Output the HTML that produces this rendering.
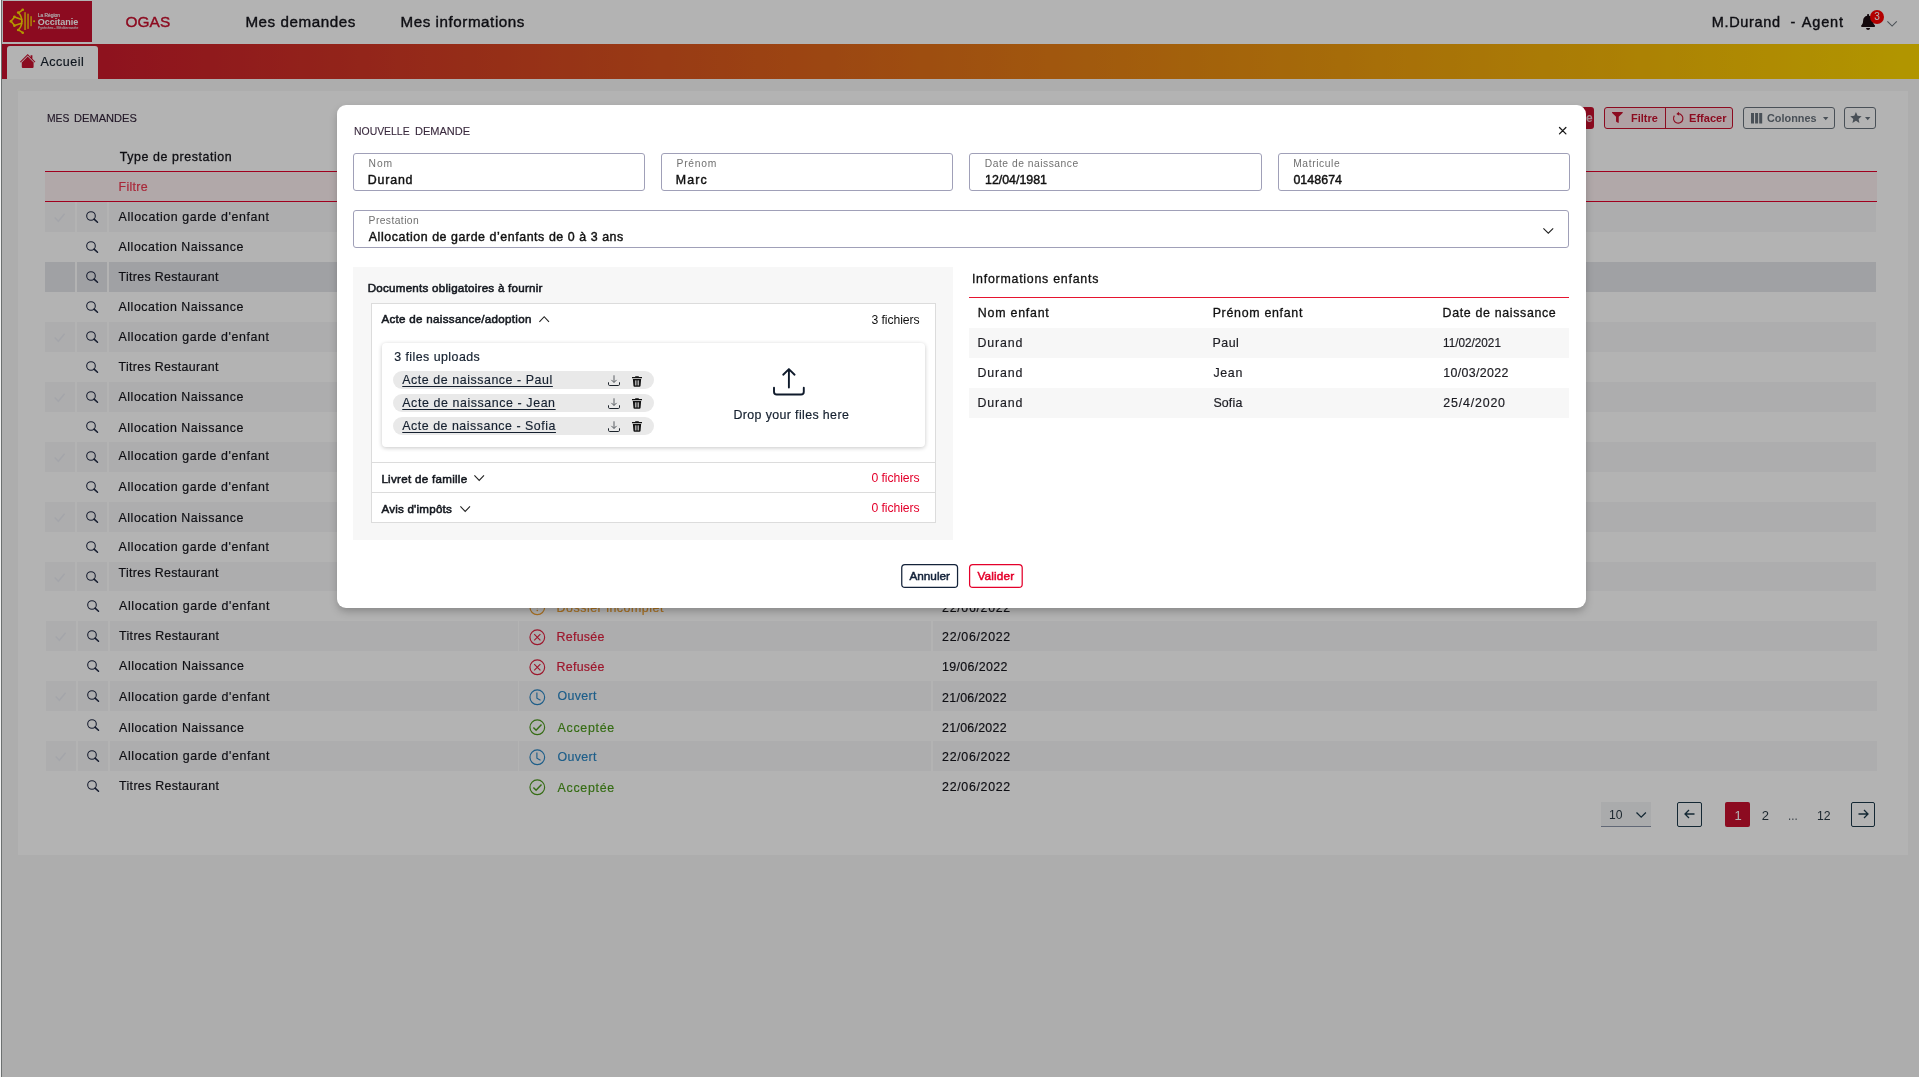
<!DOCTYPE html>
<html lang="fr"><head><meta charset="utf-8"><title>OGAS - Nouvelle demande</title>
<style>
html,body{margin:0;padding:0;}
body{width:1919px;height:1077px;overflow:hidden;position:relative;background:#f7f7f7;font-family:"Liberation Sans",sans-serif;}
body div,body span.t,body svg{position:absolute;box-sizing:border-box;}
.t{white-space:pre;line-height:1;font-family:"Liberation Sans",sans-serif;}
svg{overflow:visible;}
.L{left:0;top:0;width:1919px;height:1077px;will-change:transform;}
</style></head><body>
<div class="L"><!-- bg -->
<div style="left:0.00px;top:0.00px;width:1919.00px;height:44.00px;background:#fff;"></div>
<div style="left:3.00px;top:1.20px;width:89.00px;height:40.80px;background:#c8102e;"></div>
<svg style="left:0;top:0;width:100px;height:44px" viewBox="0 0 100 44">
<g fill="none" stroke="#ffd900" stroke-width="1.6" stroke-linecap="round" stroke-linejoin="round">
<path d="M21.9 21.3 C21.9 18 20.6 15 18.5 12.8 L22.7 9.9"/>
<path d="M21.9 21.3 C21.9 24.600 20.600 27.600 18.500 29.800 L22.700 32.700"/>
<path d="M21.6 19.4 L14.6 17 L11 21.3 L14.6 25.6 L21.6 23.200"/>
</g>
<g fill="#ffd900">
<circle cx="22.7" cy="9.8" r="1.3"/><circle cx="18.2" cy="12.6" r="1.3"/><circle cx="14.4" cy="16.8" r="1.3"/>
<circle cx="10.9" cy="21.3" r="1.35"/>
<circle cx="14.4" cy="25.800" r="1.3"/><circle cx="18.2" cy="30" r="1.3"/><circle cx="22.7" cy="32.800" r="1.3"/>
<circle cx="34.1" cy="21.3" r="1.05"/>
</g>
<g fill="#f0a010">
<rect x="24.1" y="12.2" width="1.9" height="17.8"/>
<rect x="27.1" y="13.7" width="1.9" height="15.2"/>
<rect x="30.2" y="16.2" width="1.8" height="10"/>
</g>
<g fill="#f4e9ec" font-family="Liberation Sans, sans-serif">
<text x="37.8" y="16.9" font-size="4.6" textLength="22.2" lengthAdjust="spacingAndGlyphs" stroke="#f4e9ec" stroke-width="0.18">La Région</text>
<text x="37.7" y="24.6" font-size="8.7" font-weight="700" textLength="40.6" lengthAdjust="spacingAndGlyphs" fill="#fff">Occitanie</text>
<text x="37.8" y="28.5" font-size="3.2" stroke="#e6c8ce" stroke-width="0.1" textLength="40.4" lengthAdjust="spacingAndGlyphs" fill="#e6c8ce">Pyrénées - Méditerranée</text>
</g>
</svg>
<span class="t" style="left:125.40px;top:14.00px;font-size:15.4px;color:#c8102e;-webkit-text-stroke:0.4px #c8102e;letter-spacing:0.131px;">OGAS</span>
<span class="t" style="left:245.40px;top:14.00px;font-size:15.2px;color:#15151c;-webkit-text-stroke:0.4px #15151c;letter-spacing:0.560px;">Mes demandes</span>
<span class="t" style="left:400.50px;top:14.00px;font-size:15.2px;color:#15151c;-webkit-text-stroke:0.4px #15151c;letter-spacing:0.551px;">Mes informations</span>
<span class="t" style="left:1711.80px;top:15.00px;font-size:14.5px;color:#15151c;-webkit-text-stroke:0.4px #15151c;letter-spacing:0.657px;">M.Durand</span>
<span class="t" style="left:1790.40px;top:15.00px;font-size:14.5px;color:#15151c;-webkit-text-stroke:0.4px #15151c;">-</span>
<span class="t" style="left:1801.80px;top:15.00px;font-size:14.5px;color:#15151c;-webkit-text-stroke:0.4px #15151c;letter-spacing:0.834px;">Agent</span>
<svg style="left:1860.6px;top:14.2px;width:14.2px;height:15.9px" viewBox="0 0 448 512"><path fill="#1a0a10" d="M224 512c35.3 0 63.9-28.6 63.9-64H160.1c0 35.400 28.600 64 63.900 64zm215.400-149.700c-19.300-20.800-55.500-52-55.500-154.300 0-77.700-54.500-139.900-127.900-155.200V32c0-17.700-14.300-32-32-32s-32 14.300-32 32v20.800C118.600 68.100 64.100 130.300 64.100 208c0 102.300-36.200 133.500-55.500 154.300-6 6.400-8.700 14.200-8.600 21.700.100 16.400 13 32 32.100 32h383.800c19.100 0 32-15.600 32.100-32 .100-7.500-2.600-15.300-8.600-21.700z"/></svg>
<div style="left:1869.80px;top:9.90px;width:14.20px;height:14.20px;background:#ff0000;border-radius:50%;"></div>
<span class="t" style="left:1874.20px;top:12.00px;font-size:10px;color:#fff;">3</span>
<svg style="left:1886.8px;top:20.5px;width:10.2px;height:5.8px" viewBox="0 0 10.2 5.8"><path d="M0.4 0.4 L5.1 5.1 L9.8 0.4" fill="none" stroke="#6c757d" stroke-width="1.1"/></svg>
<div style="left:0.00px;top:44.00px;width:1919.00px;height:35.00px;background:linear-gradient(90deg,#c8102e 0%,#fdd600 100%);"></div>
<div style="left:7.00px;top:46.00px;width:91.00px;height:33.00px;background:#fff;border-radius:3px 3px 0 0;"></div>
<svg style="left:19.8px;top:53.8px;width:15.4px;height:14px" viewBox="0 0 15.4 14"><path fill="#c8102e" d="M7.7 0 L10.6 2.9 V1.2 H12.4 V4.7 L15.4 7.7 L14.7 8.4 L7.7 1.5 L0.7 8.4 L0 7.7 Z"/><path fill="#c8102e" d="M7.7 2.6 L13.6 8.4 V13 Q13.6 14 12.6 14 H2.8 Q1.8 14 1.8 13 V8.4 Z"/></svg>
<span class="t" style="left:40.40px;top:56.00px;font-size:12.5px;color:#16202c;-webkit-text-stroke:0.2px #16202c;letter-spacing:0.514px;">Accueil</span>
<div style="left:18.00px;top:91.00px;width:1889.90px;height:764.00px;background:#fff;"></div>
<span class="t" style="left:46.67px;top:113.00px;font-size:11.8px;color:#33243a;-webkit-text-stroke:0.15px #33243a;transform:scaleX(0.8744);transform-origin:0 0;">MES</span>
<span class="t" style="left:73.87px;top:113.00px;font-size:11.8px;color:#33243a;-webkit-text-stroke:0.15px #33243a;transform:scaleX(0.9398);transform-origin:0 0;">DEMANDES</span>
<div style="left:1540.00px;top:107.20px;width:54.00px;height:21.80px;background:#c8102e;border-radius:3px;"></div>
<span class="t" style="left:1586.00px;top:112.00px;font-size:12px;color:#f3ccd4;font-weight:700;">e</span>
<div style="left:1604.20px;top:107.20px;width:128.80px;height:21.80px;background:#fbe6ea;border:1px solid #c8102e;border-radius:3px;"></div>
<div style="left:1665.00px;top:107.20px;width:1.00px;height:21.80px;background:#c8102e;"></div>
<svg style="left:1612.1px;top:112px;width:10.8px;height:11px" viewBox="0 0 512 512"><path fill="#c8102e" d="M487.976 0H24.028C2.710 0-8.047 25.866 7.058 40.971L192 225.941V432c0 7.831 3.821 15.170 10.237 19.662l80 55.980C298.020 518.690 320 507.493 320 487.980V225.941l184.947-184.970C520.021 25.896 509.338 0 487.976 0z"/></svg>
<span class="t" style="left:1630.60px;top:113.00px;font-size:11.8px;color:#c8102e;font-weight:700;transform:scaleX(0.9289);transform-origin:0 0;">Filtre</span>
<svg style="left:1672.3px;top:111.2px;width:12px;height:13px" viewBox="0 0 12 13"><path d="M2.400 4.600 A4.700 4.700 0 1 0 6 2.700" fill="none" stroke="#c8102e" stroke-width="1.15"/><path d="M6.900 0.700 L4.300 2.900 L7.300 4.700 Z" fill="#c8102e"/></svg>
<span class="t" style="left:1688.80px;top:113.00px;font-size:11.8px;color:#c8102e;font-weight:700;transform:scaleX(0.9379);transform-origin:0 0;">Effacer</span>
<div style="left:1743.20px;top:107.20px;width:91.80px;height:21.80px;border:1px solid #68727c;border-radius:3px;"></div>
<svg style="left:1750.8px;top:113.3px;width:11.2px;height:10.5px" viewBox="0 0 11.2 10.5"><rect x="0" y="0" width="3" height="10.500" fill="#68727c"/><rect x="4.100" y="0" width="3" height="10.500" fill="#68727c"/><rect x="8.200" y="0" width="3" height="10.500" fill="#68727c"/></svg>
<span class="t" style="left:1767.30px;top:113.00px;font-size:11.8px;color:#68727c;font-weight:700;transform:scaleX(0.9210);transform-origin:0 0;">Colonnes</span>
<svg style="left:1823.3px;top:116.6px;width:5.4px;height:3.2px" viewBox="0 0 5.4 3.2"><path d="M0 0 H5.4 L2.7 3.2 Z" fill="#68727c"/></svg>
<div style="left:1844.00px;top:107.20px;width:31.80px;height:21.80px;border:1px solid #68727c;border-radius:3px;"></div>
<svg style="left:1849.8px;top:112px;width:11.9px;height:11.4px" viewBox="0 0 24 23"><path fill="#68727c" d="M12 0 L15.3 7.6 L23.5 8.4 L17.3 13.9 L19.100 22 L12 17.8 L4.900 22 L6.700 13.900 L0.500 8.400 L8.700 7.600 Z"/></svg>
<svg style="left:1865.4px;top:116.6px;width:5.4px;height:3.2px" viewBox="0 0 5.4 3.2"><path d="M0 0 H5.4 L2.7 3.2 Z" fill="#68727c"/></svg>
<span class="t" style="left:119.85px;top:151.00px;font-size:12.4px;color:#15151c;-webkit-text-stroke:0.3px #15151c;letter-spacing:0.585px;">Type de prestation</span>
<div style="left:45.00px;top:171.20px;width:1832.00px;height:30.60px;background:#fdeff1;border-top:1.2px solid #e4002b;border-bottom:1.2px solid #e4002b;"></div>
<span class="t" style="left:118.50px;top:181.00px;font-size:12.4px;color:#f03a52;-webkit-text-stroke:0.2px #f03a52;letter-spacing:0.331px;">Filtre</span>
<div style="left:45.00px;top:202.10px;width:30.00px;height:29.90px;background:#f7f7f8;"></div>
<div style="left:77.00px;top:202.10px;width:30.00px;height:29.90px;background:#f7f7f8;"></div>
<div style="left:109.00px;top:202.10px;width:408.00px;height:29.90px;background:#f7f7f8;"></div>
<div style="left:518.00px;top:202.10px;width:412.00px;height:29.90px;background:#f7f7f8;"></div>
<div style="left:932.00px;top:202.10px;width:944.00px;height:29.90px;background:#f7f7f8;"></div>
<svg style="left:54.00px;top:212.70px;width:11.2px;height:9.2px" viewBox="0 0 11.2 9.2"><path d="M0.7 4.600 L4.400 8.300 L10.600 0.800" fill="none" stroke="#eaecf3" stroke-width="1.5"/></svg>
<svg style="left:85.80px;top:211.10px;width:12.6px;height:12px" viewBox="0 0 12.6 12"><circle cx="5" cy="5" r="4.3" fill="none" stroke="#1c2540" stroke-width="1.05"/><path d="M8.1 8.1 L11.500 11.300" stroke="#1c2540" stroke-width="1.5" stroke-linecap="round"/></svg>
<span class="t" style="left:118.59px;top:211.00px;font-size:12.4px;color:#15151c;-webkit-text-stroke:0.18px #15151c;letter-spacing:0.594px;">Allocation garde d'enfant</span>
<svg style="left:85.80px;top:241.10px;width:12.6px;height:12px" viewBox="0 0 12.6 12"><circle cx="5" cy="5" r="4.3" fill="none" stroke="#1c2540" stroke-width="1.05"/><path d="M8.1 8.1 L11.500 11.300" stroke="#1c2540" stroke-width="1.5" stroke-linecap="round"/></svg>
<span class="t" style="left:118.59px;top:241.00px;font-size:12.4px;color:#15151c;-webkit-text-stroke:0.18px #15151c;letter-spacing:0.510px;">Allocation Naissance</span>
<div style="left:45.00px;top:262.10px;width:30.00px;height:29.90px;background:#e4e5ea;"></div>
<div style="left:77.00px;top:262.10px;width:30.00px;height:29.90px;background:#e4e5ea;"></div>
<div style="left:109.00px;top:262.10px;width:408.00px;height:29.90px;background:#e4e5ea;"></div>
<div style="left:518.00px;top:262.10px;width:412.00px;height:29.90px;background:#e4e5ea;"></div>
<div style="left:932.00px;top:262.10px;width:944.00px;height:29.90px;background:#e4e5ea;"></div>
<svg style="left:85.80px;top:271.10px;width:12.6px;height:12px" viewBox="0 0 12.6 12"><circle cx="5" cy="5" r="4.3" fill="none" stroke="#1c2540" stroke-width="1.05"/><path d="M8.1 8.1 L11.500 11.300" stroke="#1c2540" stroke-width="1.5" stroke-linecap="round"/></svg>
<span class="t" style="left:118.59px;top:271.00px;font-size:12.4px;color:#15151c;-webkit-text-stroke:0.18px #15151c;letter-spacing:0.325px;">Titres Restaurant</span>
<svg style="left:85.80px;top:301.10px;width:12.6px;height:12px" viewBox="0 0 12.6 12"><circle cx="5" cy="5" r="4.3" fill="none" stroke="#1c2540" stroke-width="1.05"/><path d="M8.1 8.1 L11.500 11.300" stroke="#1c2540" stroke-width="1.5" stroke-linecap="round"/></svg>
<span class="t" style="left:118.59px;top:301.00px;font-size:12.4px;color:#15151c;-webkit-text-stroke:0.18px #15151c;letter-spacing:0.510px;">Allocation Naissance</span>
<div style="left:45.00px;top:322.10px;width:30.00px;height:29.90px;background:#f7f7f8;"></div>
<div style="left:77.00px;top:322.10px;width:30.00px;height:29.90px;background:#f7f7f8;"></div>
<div style="left:109.00px;top:322.10px;width:408.00px;height:29.90px;background:#f7f7f8;"></div>
<div style="left:518.00px;top:322.10px;width:412.00px;height:29.90px;background:#f7f7f8;"></div>
<div style="left:932.00px;top:322.10px;width:944.00px;height:29.90px;background:#f7f7f8;"></div>
<svg style="left:54.00px;top:332.70px;width:11.2px;height:9.2px" viewBox="0 0 11.2 9.2"><path d="M0.7 4.600 L4.400 8.300 L10.600 0.800" fill="none" stroke="#eaecf3" stroke-width="1.5"/></svg>
<svg style="left:85.80px;top:331.10px;width:12.6px;height:12px" viewBox="0 0 12.6 12"><circle cx="5" cy="5" r="4.3" fill="none" stroke="#1c2540" stroke-width="1.05"/><path d="M8.1 8.1 L11.500 11.300" stroke="#1c2540" stroke-width="1.5" stroke-linecap="round"/></svg>
<span class="t" style="left:118.59px;top:331.00px;font-size:12.4px;color:#15151c;-webkit-text-stroke:0.18px #15151c;letter-spacing:0.594px;">Allocation garde d'enfant</span>
<svg style="left:85.80px;top:361.10px;width:12.6px;height:12px" viewBox="0 0 12.6 12"><circle cx="5" cy="5" r="4.3" fill="none" stroke="#1c2540" stroke-width="1.05"/><path d="M8.1 8.1 L11.500 11.300" stroke="#1c2540" stroke-width="1.5" stroke-linecap="round"/></svg>
<span class="t" style="left:118.59px;top:361.00px;font-size:12.4px;color:#15151c;-webkit-text-stroke:0.18px #15151c;letter-spacing:0.325px;">Titres Restaurant</span>
<div style="left:45.00px;top:382.10px;width:30.00px;height:29.90px;background:#f7f7f8;"></div>
<div style="left:77.00px;top:382.10px;width:30.00px;height:29.90px;background:#f7f7f8;"></div>
<div style="left:109.00px;top:382.10px;width:408.00px;height:29.90px;background:#f7f7f8;"></div>
<div style="left:518.00px;top:382.10px;width:412.00px;height:29.90px;background:#f7f7f8;"></div>
<div style="left:932.00px;top:382.10px;width:944.00px;height:29.90px;background:#f7f7f8;"></div>
<svg style="left:54.00px;top:392.70px;width:11.2px;height:9.2px" viewBox="0 0 11.2 9.2"><path d="M0.7 4.600 L4.400 8.300 L10.600 0.800" fill="none" stroke="#eaecf3" stroke-width="1.5"/></svg>
<svg style="left:85.80px;top:391.10px;width:12.6px;height:12px" viewBox="0 0 12.6 12"><circle cx="5" cy="5" r="4.3" fill="none" stroke="#1c2540" stroke-width="1.05"/><path d="M8.1 8.1 L11.500 11.300" stroke="#1c2540" stroke-width="1.5" stroke-linecap="round"/></svg>
<span class="t" style="left:118.59px;top:391.00px;font-size:12.4px;color:#15151c;-webkit-text-stroke:0.18px #15151c;letter-spacing:0.510px;">Allocation Naissance</span>
<svg style="left:85.80px;top:421.10px;width:12.6px;height:12px" viewBox="0 0 12.6 12"><circle cx="5" cy="5" r="4.3" fill="none" stroke="#1c2540" stroke-width="1.05"/><path d="M8.1 8.1 L11.500 11.300" stroke="#1c2540" stroke-width="1.5" stroke-linecap="round"/></svg>
<span class="t" style="left:118.59px;top:422.00px;font-size:12.4px;color:#15151c;-webkit-text-stroke:0.18px #15151c;letter-spacing:0.510px;">Allocation Naissance</span>
<div style="left:45.00px;top:442.10px;width:30.00px;height:29.90px;background:#f7f7f8;"></div>
<div style="left:77.00px;top:442.10px;width:30.00px;height:29.90px;background:#f7f7f8;"></div>
<div style="left:109.00px;top:442.10px;width:408.00px;height:29.90px;background:#f7f7f8;"></div>
<div style="left:518.00px;top:442.10px;width:412.00px;height:29.90px;background:#f7f7f8;"></div>
<div style="left:932.00px;top:442.10px;width:944.00px;height:29.90px;background:#f7f7f8;"></div>
<svg style="left:54.00px;top:452.70px;width:11.2px;height:9.2px" viewBox="0 0 11.2 9.2"><path d="M0.7 4.600 L4.400 8.300 L10.600 0.800" fill="none" stroke="#eaecf3" stroke-width="1.5"/></svg>
<svg style="left:85.80px;top:451.10px;width:12.6px;height:12px" viewBox="0 0 12.6 12"><circle cx="5" cy="5" r="4.3" fill="none" stroke="#1c2540" stroke-width="1.05"/><path d="M8.1 8.1 L11.500 11.300" stroke="#1c2540" stroke-width="1.5" stroke-linecap="round"/></svg>
<span class="t" style="left:118.59px;top:450.00px;font-size:12.4px;color:#15151c;-webkit-text-stroke:0.18px #15151c;letter-spacing:0.594px;">Allocation garde d'enfant</span>
<svg style="left:85.80px;top:481.10px;width:12.6px;height:12px" viewBox="0 0 12.6 12"><circle cx="5" cy="5" r="4.3" fill="none" stroke="#1c2540" stroke-width="1.05"/><path d="M8.1 8.1 L11.500 11.300" stroke="#1c2540" stroke-width="1.5" stroke-linecap="round"/></svg>
<span class="t" style="left:118.59px;top:481.00px;font-size:12.4px;color:#15151c;-webkit-text-stroke:0.18px #15151c;letter-spacing:0.594px;">Allocation garde d'enfant</span>
<div style="left:45.00px;top:502.10px;width:30.00px;height:29.90px;background:#f7f7f8;"></div>
<div style="left:77.00px;top:502.10px;width:30.00px;height:29.90px;background:#f7f7f8;"></div>
<div style="left:109.00px;top:502.10px;width:408.00px;height:29.90px;background:#f7f7f8;"></div>
<div style="left:518.00px;top:502.10px;width:412.00px;height:29.90px;background:#f7f7f8;"></div>
<div style="left:932.00px;top:502.10px;width:944.00px;height:29.90px;background:#f7f7f8;"></div>
<svg style="left:54.00px;top:512.70px;width:11.2px;height:9.2px" viewBox="0 0 11.2 9.2"><path d="M0.7 4.600 L4.400 8.300 L10.600 0.800" fill="none" stroke="#eaecf3" stroke-width="1.5"/></svg>
<svg style="left:85.80px;top:511.10px;width:12.6px;height:12px" viewBox="0 0 12.6 12"><circle cx="5" cy="5" r="4.3" fill="none" stroke="#1c2540" stroke-width="1.05"/><path d="M8.1 8.1 L11.500 11.300" stroke="#1c2540" stroke-width="1.5" stroke-linecap="round"/></svg>
<span class="t" style="left:118.59px;top:512.00px;font-size:12.4px;color:#15151c;-webkit-text-stroke:0.18px #15151c;letter-spacing:0.510px;">Allocation Naissance</span>
<svg style="left:85.80px;top:541.10px;width:12.6px;height:12px" viewBox="0 0 12.6 12"><circle cx="5" cy="5" r="4.3" fill="none" stroke="#1c2540" stroke-width="1.05"/><path d="M8.1 8.1 L11.500 11.300" stroke="#1c2540" stroke-width="1.5" stroke-linecap="round"/></svg>
<span class="t" style="left:118.59px;top:541.00px;font-size:12.4px;color:#15151c;-webkit-text-stroke:0.18px #15151c;letter-spacing:0.594px;">Allocation garde d'enfant</span>
<div style="left:45.00px;top:562.10px;width:30.00px;height:28.80px;background:#f7f7f8;"></div>
<div style="left:77.00px;top:562.10px;width:30.00px;height:28.80px;background:#f7f7f8;"></div>
<div style="left:109.00px;top:562.10px;width:408.00px;height:28.80px;background:#f7f7f8;"></div>
<div style="left:518.00px;top:562.10px;width:412.00px;height:28.80px;background:#f7f7f8;"></div>
<div style="left:932.00px;top:562.10px;width:944.00px;height:28.80px;background:#f7f7f8;"></div>
<svg style="left:54.00px;top:572.70px;width:11.2px;height:9.2px" viewBox="0 0 11.2 9.2"><path d="M0.7 4.600 L4.400 8.300 L10.600 0.800" fill="none" stroke="#eaecf3" stroke-width="1.5"/></svg>
<svg style="left:85.80px;top:570.70px;width:12.6px;height:12px" viewBox="0 0 12.6 12"><circle cx="5" cy="5" r="4.3" fill="none" stroke="#1c2540" stroke-width="1.05"/><path d="M8.1 8.1 L11.500 11.300" stroke="#1c2540" stroke-width="1.5" stroke-linecap="round"/></svg>
<span class="t" style="left:118.59px;top:567.00px;font-size:12.4px;color:#15151c;-webkit-text-stroke:0.18px #15151c;letter-spacing:0.325px;">Titres Restaurant</span>
<svg style="left:86.85px;top:600.40px;width:12.6px;height:12px" viewBox="0 0 12.6 12"><circle cx="5" cy="5" r="4.3" fill="none" stroke="#1c2540" stroke-width="1.05"/><path d="M8.1 8.1 L11.500 11.300" stroke="#1c2540" stroke-width="1.5" stroke-linecap="round"/></svg>
<span class="t" style="left:119.12px;top:600.00px;font-size:12.4px;color:#15151c;-webkit-text-stroke:0.18px #15151c;letter-spacing:0.594px;">Allocation garde d'enfant</span>
<div style="left:46.05px;top:620.90px;width:30.00px;height:29.90px;background:#f7f7f8;"></div>
<div style="left:78.05px;top:620.90px;width:30.00px;height:29.90px;background:#f7f7f8;"></div>
<div style="left:110.05px;top:620.90px;width:408.00px;height:29.90px;background:#f7f7f8;"></div>
<div style="left:519.05px;top:620.90px;width:412.00px;height:29.90px;background:#f7f7f8;"></div>
<div style="left:933.05px;top:620.90px;width:944.00px;height:29.90px;background:#f7f7f8;"></div>
<svg style="left:55.05px;top:631.50px;width:11.2px;height:9.2px" viewBox="0 0 11.2 9.2"><path d="M0.7 4.600 L4.400 8.300 L10.600 0.800" fill="none" stroke="#eaecf3" stroke-width="1.5"/></svg>
<svg style="left:86.85px;top:629.90px;width:12.6px;height:12px" viewBox="0 0 12.6 12"><circle cx="5" cy="5" r="4.3" fill="none" stroke="#1c2540" stroke-width="1.05"/><path d="M8.1 8.1 L11.500 11.300" stroke="#1c2540" stroke-width="1.5" stroke-linecap="round"/></svg>
<span class="t" style="left:119.12px;top:630.00px;font-size:12.4px;color:#15151c;-webkit-text-stroke:0.18px #15151c;letter-spacing:0.325px;">Titres Restaurant</span>
<svg style="left:86.85px;top:659.90px;width:12.6px;height:12px" viewBox="0 0 12.6 12"><circle cx="5" cy="5" r="4.3" fill="none" stroke="#1c2540" stroke-width="1.05"/><path d="M8.1 8.1 L11.500 11.300" stroke="#1c2540" stroke-width="1.5" stroke-linecap="round"/></svg>
<span class="t" style="left:119.12px;top:660.00px;font-size:12.4px;color:#15151c;-webkit-text-stroke:0.18px #15151c;letter-spacing:0.510px;">Allocation Naissance</span>
<div style="left:46.05px;top:680.90px;width:30.00px;height:29.90px;background:#f7f7f8;"></div>
<div style="left:78.05px;top:680.90px;width:30.00px;height:29.90px;background:#f7f7f8;"></div>
<div style="left:110.05px;top:680.90px;width:408.00px;height:29.90px;background:#f7f7f8;"></div>
<div style="left:519.05px;top:680.90px;width:412.00px;height:29.90px;background:#f7f7f8;"></div>
<div style="left:933.05px;top:680.90px;width:944.00px;height:29.90px;background:#f7f7f8;"></div>
<svg style="left:55.05px;top:691.50px;width:11.2px;height:9.2px" viewBox="0 0 11.2 9.2"><path d="M0.7 4.600 L4.400 8.300 L10.600 0.800" fill="none" stroke="#eaecf3" stroke-width="1.5"/></svg>
<svg style="left:86.85px;top:689.90px;width:12.6px;height:12px" viewBox="0 0 12.6 12"><circle cx="5" cy="5" r="4.3" fill="none" stroke="#1c2540" stroke-width="1.05"/><path d="M8.1 8.1 L11.500 11.300" stroke="#1c2540" stroke-width="1.5" stroke-linecap="round"/></svg>
<span class="t" style="left:119.12px;top:691.00px;font-size:12.4px;color:#15151c;-webkit-text-stroke:0.18px #15151c;letter-spacing:0.594px;">Allocation garde d'enfant</span>
<svg style="left:86.85px;top:718.70px;width:12.6px;height:12px" viewBox="0 0 12.6 12"><circle cx="5" cy="5" r="4.3" fill="none" stroke="#1c2540" stroke-width="1.05"/><path d="M8.1 8.1 L11.500 11.300" stroke="#1c2540" stroke-width="1.5" stroke-linecap="round"/></svg>
<span class="t" style="left:119.12px;top:722.00px;font-size:12.4px;color:#15151c;-webkit-text-stroke:0.18px #15151c;letter-spacing:0.510px;">Allocation Naissance</span>
<div style="left:46.05px;top:740.90px;width:30.00px;height:29.90px;background:#f7f7f8;"></div>
<div style="left:78.05px;top:740.90px;width:30.00px;height:29.90px;background:#f7f7f8;"></div>
<div style="left:110.05px;top:740.90px;width:408.00px;height:29.90px;background:#f7f7f8;"></div>
<div style="left:519.05px;top:740.90px;width:412.00px;height:29.90px;background:#f7f7f8;"></div>
<div style="left:933.05px;top:740.90px;width:944.00px;height:29.90px;background:#f7f7f8;"></div>
<svg style="left:55.05px;top:751.50px;width:11.2px;height:9.2px" viewBox="0 0 11.2 9.2"><path d="M0.7 4.600 L4.400 8.300 L10.600 0.800" fill="none" stroke="#eaecf3" stroke-width="1.5"/></svg>
<svg style="left:86.85px;top:749.90px;width:12.6px;height:12px" viewBox="0 0 12.6 12"><circle cx="5" cy="5" r="4.3" fill="none" stroke="#1c2540" stroke-width="1.05"/><path d="M8.1 8.1 L11.500 11.300" stroke="#1c2540" stroke-width="1.5" stroke-linecap="round"/></svg>
<span class="t" style="left:119.12px;top:750.00px;font-size:12.4px;color:#15151c;-webkit-text-stroke:0.18px #15151c;letter-spacing:0.594px;">Allocation garde d'enfant</span>
<svg style="left:86.85px;top:779.90px;width:12.6px;height:12px" viewBox="0 0 12.6 12"><circle cx="5" cy="5" r="4.3" fill="none" stroke="#1c2540" stroke-width="1.05"/><path d="M8.1 8.1 L11.500 11.300" stroke="#1c2540" stroke-width="1.5" stroke-linecap="round"/></svg>
<span class="t" style="left:119.12px;top:780.00px;font-size:12.4px;color:#15151c;-webkit-text-stroke:0.18px #15151c;letter-spacing:0.325px;">Titres Restaurant</span>
<svg style="left:528.7px;top:598.50px;width:16.6px;height:16.6px" viewBox="0 0 16.6 16.6"><circle cx="8.300" cy="8.300" r="7.350" fill="none" stroke="#f0a030" stroke-width="1.150"/><path d="M8.300 4.500 V9.300" stroke="#f0a030" stroke-width="1.2" fill="none"/><circle cx="8.300" cy="11.500" r="0.8" fill="#f0a030"/></svg>
<span class="t" style="left:556.59px;top:602.00px;font-size:12.4px;color:#f0a030;-webkit-text-stroke:0.18px #f0a030;letter-spacing:0.518px;">Dossier incomplet</span>
<span class="t" style="left:942.09px;top:602.00px;font-size:12.4px;color:#15151c;-webkit-text-stroke:0.18px #15151c;letter-spacing:0.677px;">22/06/2022</span>
<svg style="left:528.7px;top:628.50px;width:16.6px;height:16.6px" viewBox="0 0 16.6 16.6"><circle cx="8.300" cy="8.300" r="7.350" fill="none" stroke="#e0203f" stroke-width="1.150"/><path d="M5.200 5.200 L11.400 11.400 M11.400 5.200 L5.200 11.400" stroke="#e0203f" stroke-width="1.15" fill="none"/></svg>
<span class="t" style="left:556.59px;top:631.00px;font-size:12.4px;color:#e0203f;-webkit-text-stroke:0.18px #e0203f;letter-spacing:0.260px;">Refusée</span>
<span class="t" style="left:942.09px;top:631.00px;font-size:12.4px;color:#15151c;-webkit-text-stroke:0.18px #15151c;letter-spacing:0.677px;">22/06/2022</span>
<svg style="left:528.7px;top:658.50px;width:16.6px;height:16.6px" viewBox="0 0 16.6 16.6"><circle cx="8.300" cy="8.300" r="7.350" fill="none" stroke="#e0203f" stroke-width="1.150"/><path d="M5.200 5.200 L11.400 11.400 M11.400 5.200 L5.200 11.400" stroke="#e0203f" stroke-width="1.15" fill="none"/></svg>
<span class="t" style="left:556.59px;top:661.00px;font-size:12.4px;color:#e0203f;-webkit-text-stroke:0.18px #e0203f;letter-spacing:0.260px;">Refusée</span>
<span class="t" style="left:942.09px;top:661.00px;font-size:12.4px;color:#15151c;-webkit-text-stroke:0.18px #15151c;letter-spacing:0.355px;">19/06/2022</span>
<svg style="left:528.7px;top:688.50px;width:16.6px;height:16.6px" viewBox="0 0 16.6 16.6"><circle cx="8.300" cy="8.300" r="7.350" fill="none" stroke="#2a86c4" stroke-width="1.150"/><path d="M7.900 3.400 V9.200 L11.500 11.200" stroke="#2a86c4" stroke-width="1.15" fill="none"/></svg>
<span class="t" style="left:557.59px;top:690.00px;font-size:12.4px;color:#2a86c4;-webkit-text-stroke:0.18px #2a86c4;letter-spacing:0.356px;">Ouvert</span>
<span class="t" style="left:942.09px;top:692.00px;font-size:12.4px;color:#15151c;-webkit-text-stroke:0.18px #15151c;letter-spacing:0.277px;">21/06/2022</span>
<svg style="left:528.7px;top:718.50px;width:16.6px;height:16.6px" viewBox="0 0 16.6 16.6"><circle cx="8.300" cy="8.300" r="7.350" fill="none" stroke="#4c9a1c" stroke-width="1.150"/><path d="M4.400 8.500 L7.100 11.200 L12.500 5.400" stroke="#4c9a1c" stroke-width="1.5" fill="none"/></svg>
<span class="t" style="left:557.59px;top:722.00px;font-size:12.4px;color:#4c9a1c;-webkit-text-stroke:0.18px #4c9a1c;letter-spacing:0.707px;">Acceptée</span>
<span class="t" style="left:942.09px;top:722.00px;font-size:12.4px;color:#15151c;-webkit-text-stroke:0.18px #15151c;letter-spacing:0.277px;">21/06/2022</span>
<svg style="left:528.7px;top:748.50px;width:16.6px;height:16.6px" viewBox="0 0 16.6 16.6"><circle cx="8.300" cy="8.300" r="7.350" fill="none" stroke="#2a86c4" stroke-width="1.150"/><path d="M7.900 3.400 V9.200 L11.500 11.200" stroke="#2a86c4" stroke-width="1.15" fill="none"/></svg>
<span class="t" style="left:557.59px;top:751.00px;font-size:12.4px;color:#2a86c4;-webkit-text-stroke:0.18px #2a86c4;letter-spacing:0.356px;">Ouvert</span>
<span class="t" style="left:942.09px;top:751.00px;font-size:12.4px;color:#15151c;-webkit-text-stroke:0.18px #15151c;letter-spacing:0.677px;">22/06/2022</span>
<svg style="left:528.7px;top:778.50px;width:16.6px;height:16.6px" viewBox="0 0 16.6 16.6"><circle cx="8.300" cy="8.300" r="7.350" fill="none" stroke="#4c9a1c" stroke-width="1.150"/><path d="M4.400 8.500 L7.100 11.200 L12.500 5.400" stroke="#4c9a1c" stroke-width="1.5" fill="none"/></svg>
<span class="t" style="left:557.59px;top:782.00px;font-size:12.4px;color:#4c9a1c;-webkit-text-stroke:0.18px #4c9a1c;letter-spacing:0.707px;">Acceptée</span>
<span class="t" style="left:942.09px;top:781.00px;font-size:12.4px;color:#15151c;-webkit-text-stroke:0.18px #15151c;letter-spacing:0.677px;">22/06/2022</span>
<div style="left:1601.40px;top:802.10px;width:50.00px;height:24.50px;background:#f3f4f6;border-bottom:1px solid #8a94a8;"></div>
<span class="t" style="left:1608.90px;top:808.00px;font-size:13px;color:#2a3a44;transform:scaleX(0.9346);transform-origin:0 0;">10</span>
<svg style="left:1635.9px;top:811.6px;width:10.4px;height:6px" viewBox="0 0 10.4 6"><path d="M0.5 0.5 L5.200 5.200 L9.900 0.5" fill="none" stroke="#1d3a4a" stroke-width="1.3"/></svg>
<div style="left:1677.20px;top:802.10px;width:25.00px;height:24.70px;border:1px solid #1d3a4a;border-radius:2px;"></div>
<svg style="left:1684.2px;top:809.4px;width:11px;height:10px" viewBox="0 0 11 10"><path d="M10.500 5 H1 M5 1 L1 5 L5 9" fill="none" stroke="#1d3a4a" stroke-width="1.3"/></svg>
<div style="left:1725.00px;top:802.10px;width:25.00px;height:24.70px;background:#c8102e;border-radius:2px;"></div>
<span class="t" style="left:1734.40px;top:809.00px;font-size:13px;color:#fff;">1</span>
<span class="t" style="left:1761.80px;top:809.00px;font-size:13px;color:#2a3a44;">2</span>
<span class="t" style="left:1787.71px;top:809.00px;font-size:13px;color:#55606a;transform:scaleX(0.8890);transform-origin:0 0;">...</span>
<span class="t" style="left:1817.40px;top:809.00px;font-size:13px;color:#2a3a44;transform:scaleX(0.9417);transform-origin:0 0;">12</span>
<div style="left:1851.30px;top:802.10px;width:23.60px;height:24.70px;border:1px solid #1d3a4a;border-radius:2px;"></div>
<svg style="left:1857.6px;top:809.4px;width:11px;height:10px" viewBox="0 0 11 10"><path d="M0.500 5 H10 M6 1 L10 5 L6 9" fill="none" stroke="#1d3a4a" stroke-width="1.3"/></svg>
</div>
<div class="L"><!-- overlay -->
<div style="left:0.00px;top:0.00px;width:1919.00px;height:1077.00px;background:rgba(0,0,0,0.298);"></div>
</div>
<div class="L"><!-- modal -->
<div style="left:337.00px;top:104.80px;width:1249.00px;height:503.20px;background:#fff;border-radius:9px;box-shadow:0 4px 9px -1px rgba(0,0,0,0.26);"></div>
<span class="t" style="left:353.85px;top:126.00px;font-size:11.4px;color:#3a2a3e;-webkit-text-stroke:0.12px #3a2a3e;transform:scaleX(0.9152);transform-origin:0 0;">NOUVELLE</span>
<span class="t" style="left:414.86px;top:126.00px;font-size:11.4px;color:#3a2a3e;-webkit-text-stroke:0.12px #3a2a3e;transform:scaleX(0.9673);transform-origin:0 0;">DEMANDE</span>
<svg style="left:1558.6px;top:126.8px;width:7.4px;height:7.4px" viewBox="0 0 7.4 7.4"><path d="M0.5 0.5 L6.900 6.900 M6.900 0.5 L0.5 6.900" stroke="#1a1a1a" stroke-width="1.3" stroke-linecap="round" fill="none"/></svg>
<div style="left:353.00px;top:153.00px;width:292.40px;height:37.80px;border:1px solid #a0a0b8;border-radius:3px;"></div>
<span class="t" style="left:368.60px;top:159.00px;font-size:10.3px;color:#707070;letter-spacing:0.919px;">Nom</span>
<span class="t" style="left:367.81px;top:174.00px;font-size:12.4px;color:#111;-webkit-text-stroke:0.42px #111;letter-spacing:0.806px;">Durand</span>
<div style="left:661.00px;top:153.00px;width:292.40px;height:37.80px;border:1px solid #a0a0b8;border-radius:3px;"></div>
<span class="t" style="left:676.60px;top:159.00px;font-size:10.3px;color:#707070;letter-spacing:0.725px;">Prénom</span>
<span class="t" style="left:675.81px;top:174.00px;font-size:12.4px;color:#111;-webkit-text-stroke:0.42px #111;letter-spacing:1.080px;">Marc</span>
<div style="left:969.20px;top:153.00px;width:292.40px;height:37.80px;border:1px solid #a0a0b8;border-radius:3px;"></div>
<span class="t" style="left:984.80px;top:159.00px;font-size:10.3px;color:#707070;letter-spacing:0.502px;">Date de naissance</span>
<span class="t" style="left:985.01px;top:174.00px;font-size:12.4px;color:#111;-webkit-text-stroke:0.42px #111;">12/04/1981</span>
<div style="left:1277.60px;top:153.00px;width:292.40px;height:37.80px;border:1px solid #a0a0b8;border-radius:3px;"></div>
<span class="t" style="left:1293.20px;top:159.00px;font-size:10.3px;color:#707070;letter-spacing:0.594px;">Matricule</span>
<span class="t" style="left:1293.41px;top:174.00px;font-size:12.4px;color:#111;-webkit-text-stroke:0.42px #111;letter-spacing:0.056px;">0148674</span>
<div style="left:353.00px;top:210.40px;width:1216.20px;height:37.20px;border:1px solid #a0a0b8;border-radius:3px;"></div>
<span class="t" style="left:368.60px;top:216.00px;font-size:10.3px;color:#707070;letter-spacing:0.418px;">Prestation</span>
<span class="t" style="left:368.81px;top:231.00px;font-size:12.4px;color:#111;-webkit-text-stroke:0.42px #111;letter-spacing:0.561px;">Allocation de garde d’enfants de 0 à 3 ans</span>
<svg style="left:1543px;top:228.1px;width:10.6px;height:5.8px" viewBox="0 0 10.6 5.8"><path d="M0.4 0.4 L5.300 5.200 L10.200 0.4" fill="none" stroke="#222" stroke-width="1.1"/></svg>
<div style="left:352.70px;top:266.70px;width:600.30px;height:273.00px;background:#f7f7f7;"></div>
<span class="t" style="left:367.67px;top:282.00px;font-size:11.6px;color:#14181f;-webkit-text-stroke:0.55px #14181f;letter-spacing:0.255px;">Documents obligatoires à fournir</span>
<div style="left:371.00px;top:303.40px;width:565.00px;height:219.40px;background:#fff;border:1px solid #dcdcdc;"></div>
<div style="left:371.00px;top:461.80px;width:565.00px;height:1.00px;background:#dcdcdc;"></div>
<div style="left:371.00px;top:492.00px;width:565.00px;height:1.00px;background:#dcdcdc;"></div>
<span class="t" style="left:381.38px;top:313.00px;font-size:11.6px;color:#14181f;-webkit-text-stroke:0.55px #14181f;letter-spacing:0.302px;">Acte de naissance/adoption</span>
<svg style="left:539.2px;top:316.1px;width:10.4px;height:6.2px" viewBox="0 0 10.4 6.2"><path d="M0.4 5.800 L5.200 0.700 L10 5.800" fill="none" stroke="#222" stroke-width="1.1"/></svg>
<span class="t" style="left:871.40px;top:314.00px;font-size:12.2px;color:#111;letter-spacing:-0.064px;">3 fichiers</span>
<span class="t" style="left:381.38px;top:473.00px;font-size:11.6px;color:#14181f;-webkit-text-stroke:0.55px #14181f;letter-spacing:0.288px;">Livret de famille</span>
<svg style="left:474.4px;top:475.4px;width:10.4px;height:6.2px" viewBox="0 0 10.4 6.2"><path d="M0.4 0.4 L5.200 5.500 L10 0.4" fill="none" stroke="#222" stroke-width="1.1"/></svg>
<span class="t" style="left:871.40px;top:472.00px;font-size:12.2px;color:#e4002b;letter-spacing:-0.064px;">0 fichiers</span>
<span class="t" style="left:381.38px;top:503.00px;font-size:11.6px;color:#14181f;-webkit-text-stroke:0.55px #14181f;letter-spacing:0.227px;">Avis d'impôts</span>
<svg style="left:459.7px;top:505.500px;width:10.4px;height:6.2px" viewBox="0 0 10.4 6.2"><path d="M0.4 0.4 L5.200 5.500 L10 0.4" fill="none" stroke="#222" stroke-width="1.1"/></svg>
<span class="t" style="left:871.40px;top:502.00px;font-size:12.2px;color:#e4002b;letter-spacing:-0.064px;">0 fichiers</span>
<div style="left:381.80px;top:342.90px;width:543.40px;height:104.30px;background:#fff;border-radius:4px;box-shadow:0 1px 4px rgba(0,0,0,0.22);"></div>
<span class="t" style="left:394.19px;top:351.00px;font-size:12.4px;color:#15202f;-webkit-text-stroke:0.18px #15202f;letter-spacing:0.457px;">3 files uploads</span>
<div style="left:392.80px;top:371.20px;width:261.00px;height:17.80px;background:#e9e9e9;border-radius:9px;"></div>
<span class="t" style="left:402.27px;top:374.00px;font-size:12.4px;color:#15202f;-webkit-text-stroke:0.15px #15202f;letter-spacing:0.562px;text-decoration:underline;text-underline-offset:1.5px;text-decoration-thickness:1px;">Acte de naissance - Paul</span>
<svg style="left:608px;top:375.40px;width:12px;height:11px" viewBox="0 0 12 11"><path d="M6 0.3 V7.300 M3.400 4.900 L6 7.500 L8.600 4.900" fill="none" stroke="#4a4f55" stroke-width="0.9"/><path d="M0.500 7.300 V9.300 Q0.500 10.500 1.700 10.500 H10.300 Q11.500 10.500 11.500 9.300 V7.300" fill="none" stroke="#1c232b" stroke-width="1"/></svg>
<svg style="left:631.7px;top:375.50px;width:10px;height:11px" viewBox="0 0 10.4 11"><path fill="#111" d="M3.600 0 H6.800 L7.300 0.900 H10.400 V2.200 H0 V0.900 H3.100 Z M0.900 3 H9.500 L8.900 10 Q8.800 11 7.800 11 H2.600 Q1.600 11 1.500 10 Z"/><path d="M3.600 4.300 V9.600 M5.200 4.300 V9.600 M6.800 4.300 V9.600" stroke="#fff" stroke-width="0.7"/></svg>
<div style="left:392.80px;top:394.10px;width:261.00px;height:17.80px;background:#e9e9e9;border-radius:9px;"></div>
<span class="t" style="left:402.27px;top:397.00px;font-size:12.4px;color:#15202f;-webkit-text-stroke:0.15px #15202f;letter-spacing:0.592px;text-decoration:underline;text-underline-offset:1.5px;text-decoration-thickness:1px;">Acte de naissance - Jean</span>
<svg style="left:608px;top:398.30px;width:12px;height:11px" viewBox="0 0 12 11"><path d="M6 0.3 V7.300 M3.400 4.900 L6 7.500 L8.600 4.900" fill="none" stroke="#4a4f55" stroke-width="0.9"/><path d="M0.500 7.300 V9.300 Q0.500 10.500 1.700 10.500 H10.300 Q11.500 10.500 11.500 9.300 V7.300" fill="none" stroke="#1c232b" stroke-width="1"/></svg>
<svg style="left:631.7px;top:398.40px;width:10px;height:11px" viewBox="0 0 10.4 11"><path fill="#111" d="M3.600 0 H6.800 L7.300 0.900 H10.400 V2.200 H0 V0.900 H3.100 Z M0.900 3 H9.500 L8.900 10 Q8.800 11 7.800 11 H2.600 Q1.600 11 1.500 10 Z"/><path d="M3.600 4.300 V9.600 M5.200 4.300 V9.600 M6.800 4.300 V9.600" stroke="#fff" stroke-width="0.7"/></svg>
<div style="left:392.80px;top:417.00px;width:261.00px;height:17.80px;background:#e9e9e9;border-radius:9px;"></div>
<span class="t" style="left:402.27px;top:420.00px;font-size:12.4px;color:#15202f;-webkit-text-stroke:0.15px #15202f;letter-spacing:0.526px;text-decoration:underline;text-underline-offset:1.5px;text-decoration-thickness:1px;">Acte de naissance - Sofia</span>
<svg style="left:608px;top:421.20px;width:12px;height:11px" viewBox="0 0 12 11"><path d="M6 0.3 V7.300 M3.400 4.900 L6 7.500 L8.600 4.900" fill="none" stroke="#4a4f55" stroke-width="0.9"/><path d="M0.500 7.300 V9.300 Q0.500 10.500 1.700 10.500 H10.300 Q11.500 10.500 11.500 9.300 V7.300" fill="none" stroke="#1c232b" stroke-width="1"/></svg>
<svg style="left:631.7px;top:421.30px;width:10px;height:11px" viewBox="0 0 10.4 11"><path fill="#111" d="M3.600 0 H6.800 L7.300 0.900 H10.400 V2.200 H0 V0.900 H3.100 Z M0.900 3 H9.500 L8.900 10 Q8.800 11 7.800 11 H2.600 Q1.600 11 1.500 10 Z"/><path d="M3.600 4.300 V9.600 M5.200 4.300 V9.600 M6.800 4.300 V9.600" stroke="#fff" stroke-width="0.7"/></svg>
<svg style="left:772.8px;top:368px;width:31.8px;height:27.4px" viewBox="0 0 31.8 27.4"><path d="M15.900 19.600 V1.200 M10.200 6.700 L15.900 1.100 L21.600 6.700" fill="none" stroke="#0f1a2b" stroke-width="1.9" stroke-linecap="round" stroke-linejoin="round"/><path d="M1 19.800 V23.700 Q1 26.500 3.800 26.500 H28 Q30.800 26.500 30.800 23.700 V19.800" fill="none" stroke="#0f1a2b" stroke-width="1.9" stroke-linecap="round"/></svg>
<span class="t" style="left:733.49px;top:409.00px;font-size:12.4px;color:#15202f;-webkit-text-stroke:0.18px #15202f;letter-spacing:0.378px;">Drop your files here</span>
<span class="t" style="left:971.95px;top:273.00px;font-size:12.4px;color:#111;-webkit-text-stroke:0.3px #111;letter-spacing:0.744px;">Informations enfants</span>
<div style="left:969.00px;top:296.50px;width:600.00px;height:1.30px;background:#e6142f;"></div>
<div style="left:969.00px;top:328.00px;width:600.00px;height:29.80px;background:#f7f7f7;"></div>
<div style="left:969.00px;top:387.80px;width:600.00px;height:30.00px;background:#f7f7f7;"></div>
<span class="t" style="left:977.75px;top:307.00px;font-size:12.4px;color:#111;-webkit-text-stroke:0.3px #111;letter-spacing:0.777px;">Nom enfant</span>
<span class="t" style="left:1212.65px;top:307.00px;font-size:12.4px;color:#111;-webkit-text-stroke:0.3px #111;letter-spacing:0.705px;">Prénom enfant</span>
<span class="t" style="left:1442.55px;top:307.00px;font-size:12.4px;color:#111;-webkit-text-stroke:0.3px #111;letter-spacing:0.660px;">Date de naissance</span>
<span class="t" style="left:977.39px;top:337.00px;font-size:12.4px;color:#1c1c22;-webkit-text-stroke:0.18px #1c1c22;letter-spacing:0.854px;">Durand</span>
<span class="t" style="left:1212.39px;top:337.00px;font-size:12.4px;color:#1c1c22;-webkit-text-stroke:0.18px #1c1c22;letter-spacing:0.558px;">Paul</span>
<span class="t" style="left:1443.29px;top:337.00px;font-size:12.4px;color:#1c1c22;-webkit-text-stroke:0.18px #1c1c22;transform:scaleX(0.9482);transform-origin:0 0;">11/02/2021</span>
<span class="t" style="left:977.39px;top:367.00px;font-size:12.4px;color:#1c1c22;-webkit-text-stroke:0.18px #1c1c22;letter-spacing:0.854px;">Durand</span>
<span class="t" style="left:1213.39px;top:367.00px;font-size:12.4px;color:#1c1c22;-webkit-text-stroke:0.18px #1c1c22;letter-spacing:0.681px;">Jean</span>
<span class="t" style="left:1443.29px;top:367.00px;font-size:12.4px;color:#1c1c22;-webkit-text-stroke:0.18px #1c1c22;letter-spacing:0.333px;">10/03/2022</span>
<span class="t" style="left:977.39px;top:397.00px;font-size:12.4px;color:#1c1c22;-webkit-text-stroke:0.18px #1c1c22;letter-spacing:0.854px;">Durand</span>
<span class="t" style="left:1213.39px;top:397.00px;font-size:12.4px;color:#1c1c22;-webkit-text-stroke:0.18px #1c1c22;letter-spacing:0.167px;">Sofia</span>
<span class="t" style="left:1443.29px;top:397.00px;font-size:12.4px;color:#1c1c22;-webkit-text-stroke:0.18px #1c1c22;letter-spacing:0.824px;">25/4/2020</span>
<svg style="left:900px;top:563px;width:60px;height:26px" viewBox="0 0 60 26"><rect x="1.75" y="1.6" width="55.8" height="22.8" rx="3.2" fill="#fff" stroke="#14233a" stroke-width="1.25"/></svg>
<span class="t" style="left:909.45px;top:571.00px;font-size:11.8px;color:#14233a;-webkit-text-stroke:0.5px #14233a;letter-spacing:-0.022px;">Annuler</span>
<svg style="left:968px;top:563px;width:58px;height:26px" viewBox="0 0 58 26"><rect x="1.6" y="1.6" width="52.6" height="22.8" rx="3.2" fill="#fff" stroke="#e4002b" stroke-width="1.25"/></svg>
<span class="t" style="left:977.45px;top:571.00px;font-size:11.8px;color:#e4002b;-webkit-text-stroke:0.5px #e4002b;letter-spacing:0.130px;">Valider</span>
</div>
<div class="L"><!-- top -->
<div style="left:0.00px;top:0.00px;width:1.10px;height:1077.00px;background:#f2f2f2;"></div>
<div style="left:1.10px;top:0.00px;width:0.85px;height:1077.00px;background:#6c7070;"></div>
</div>
</body></html>
